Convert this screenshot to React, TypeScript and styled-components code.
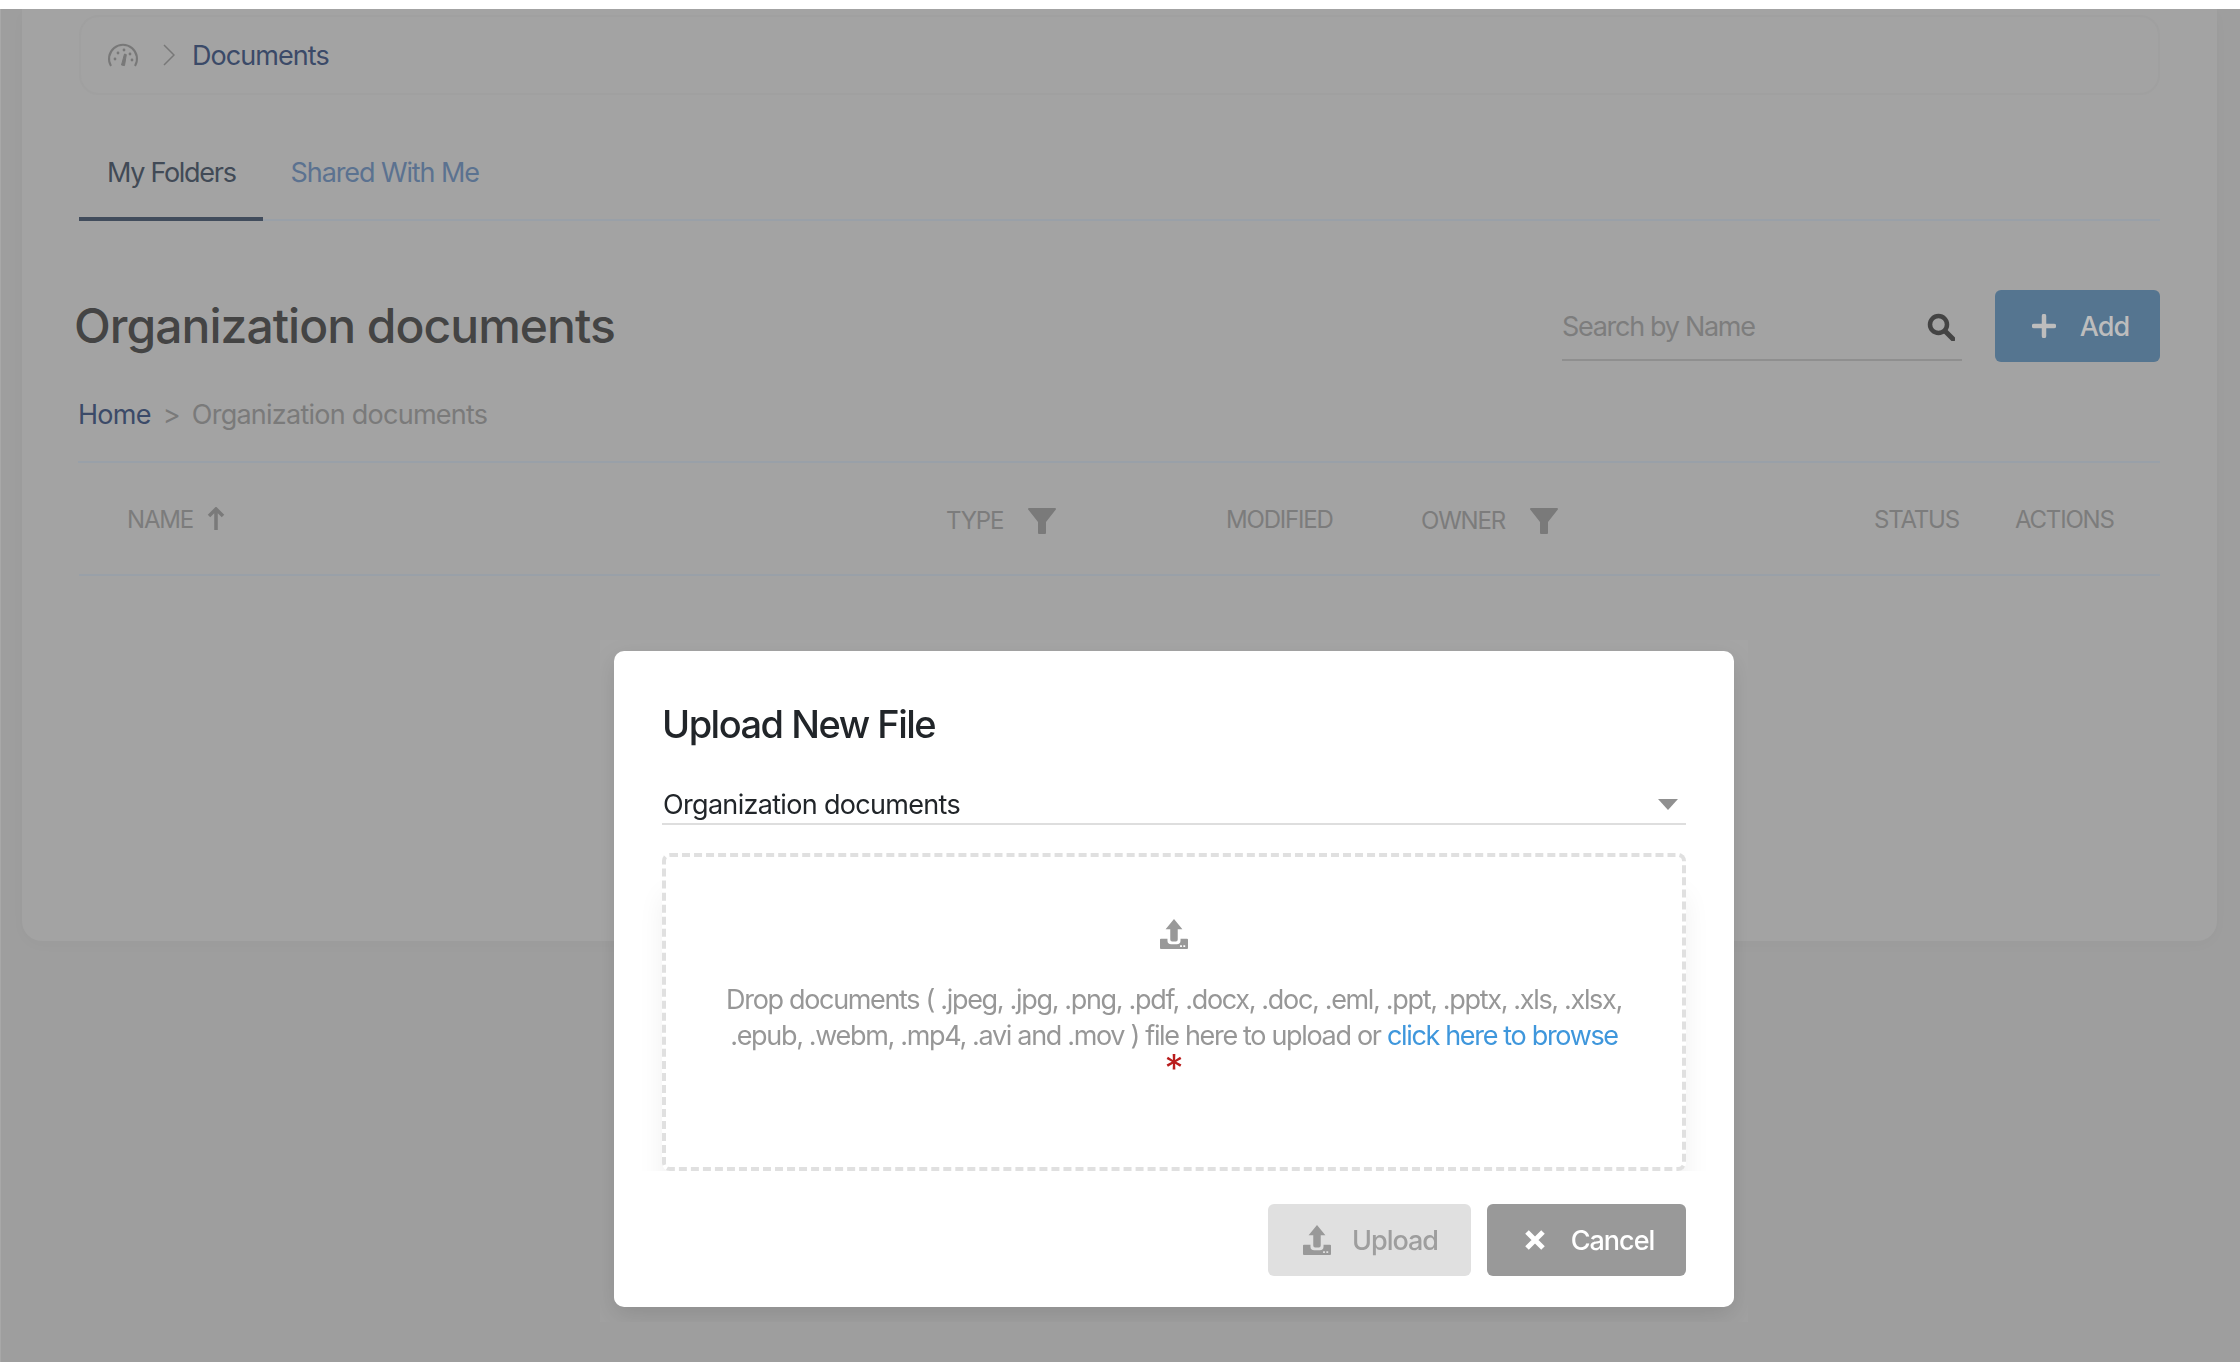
import React from 'react';
import styled, { createGlobalStyle } from 'styled-components';

const GlobalStyle = createGlobalStyle`
  html, body {
    margin: 0;
    height: 100%;
    overflow: hidden;
    background: #fff;
    font-family: Inter, "Noto Sans", "Liberation Sans", sans-serif;
  }
  * { box-sizing: border-box; }
`;

const TopStrip = styled.div`
  height: 9px;
  background: #fff;
`;

const Page = styled.div`
  height: 1353px;
  background: #9e9e9e;
  border-left: 1px solid #a8a8a8;
  padding: 0 23px 0 21px;
  overflow: hidden;
`;

const Card = styled.main`
  height: 932px;
  background: #a3a3a3;
  border-radius: 0 0 20px 20px;
  box-shadow: 0 4px 16px rgba(0, 0, 0, 0.02);
  padding: 6px 57px 0 57px;
`;

const Crumbs = styled.nav`
  height: 80px;
  border: 2px solid #a0a0a0;
  border-radius: 20px;
  display: flex;
  align-items: center;
  padding: 0 0 0 26px;
`;

const CrumbLink = styled.span`
  margin-left: 17px;
  font-size: 27px;
  letter-spacing: -0.95px;
  color: #3b4a68;
`;

const CrumbArrow = styled.svg`
  margin-left: 24px;
  width: 12px;
  height: 22px;
`;

const Tabs = styled.div`
  margin-top: 51px;
  height: 75px;
  display: flex;
  border-bottom: 2px solid #99a0a8;
`;

const Tab = styled.div<{ $active?: boolean }>`
  height: 75px;
  padding: 10px 27px 0 28px;
  font-size: 27px;
  letter-spacing: ${(p) => (p.$active ? '-1.3px' : '-1.1px')};
  color: ${(p) => (p.$active ? '#414a56' : '#5b7290')};
  border-bottom: ${(p) => (p.$active ? '4px solid #414c5c' : 'none')};
`;

const TitleRow = styled.div`
  margin-top: 69px;
  display: flex;
  align-items: flex-start;
`;

const Title = styled.h1`
  margin: 0 0 0 -5px;
  flex: 1;
  font-size: 48px;
  line-height: 72px;
  font-weight: 500;
  letter-spacing: -0.98px;
  color: #444;
`;

const Search = styled.div`
  width: 400px;
  height: 71px;
  border-bottom: 2px solid #8f8f8f;
  display: flex;
  align-items: center;
  justify-content: space-between;
  padding: 4px 7px 0 0;
  font-size: 27px;
  letter-spacing: -1.3px;
  color: #7d7d7d;
`;

const AddButton = styled.button`
  margin-left: 33px;
  width: 165px;
  height: 72px;
  border: none;
  border-radius: 6px;
  background: #557590;
  color: #bdbdbd;
  display: flex;
  align-items: center;
  justify-content: center;
  gap: 24px;
  padding: 0 0 0 6px;
  font: 500 27px Inter, "Noto Sans", sans-serif;
  letter-spacing: -0.9px;
`;

const Trail = styled.div`
  margin: 34px 0 0 -1px;
  height: 67px;
  display: flex;
  gap: 12px;
  font-size: 27px;
  line-height: 38px;
  letter-spacing: -0.75px;
  color: #7a7a7a;
  border-bottom: 2px solid #99a0a8;
`;

const TrailHome = styled.span`
  color: #3b4a68;
`;

const HeaderRow = styled.div`
  height: 113px;
  display: grid;
  grid-template-columns: 819px 280px 195px 453px 141px 1fr;
  align-items: center;
  padding: 1px 0 0 48px;
  border-bottom: 2px solid #99a0a8;
`;

const HeaderCell = styled.div`
  display: flex;
  align-items: center;
  gap: 14px;
  font-size: 24px;
  letter-spacing: -1.2px;
  color: #7c7c7c;
`;

const FilterCell = styled(HeaderCell)`
  gap: 25px;
  margin-top: 3px;
`;

const Overlay = styled.div`
  position: fixed;
  top: 9px;
  left: 0;
  right: 0;
  bottom: 0;
  display: flex;
  justify-content: flex-start;
  padding: 631px 0 0 600px;
`;

const ModalClip = styled.div`
  width: 1148px;
  height: 682px;
  padding: 11px 14px;
  overflow: hidden;
  background: rgba(255, 255, 255, 0.03);
`;

const Modal = styled.div`
  width: 1120px;
  height: 656px;
  background: #fff;
  border-radius: 10px;
  box-shadow: 0 8px 24px rgba(0, 0, 0, 0.12);
  padding: 49px 48px 0 48px;
`;

const ModalTitle = styled.h2`
  margin: 0;
  font-size: 38px;
  line-height: 48px;
  font-weight: 500;
  letter-spacing: -1.5px;
  color: #212529;
`;

const SelectBox = styled.div`
  margin-top: 29px;
  height: 48px;
  display: flex;
  align-items: center;
  justify-content: space-between;
  padding: 8px 8px 0 1px;
  border-bottom: 2px solid #dedede;
  font-size: 27px;
  letter-spacing: -0.68px;
  color: #212529;
`;

const DropZone = styled.div`
  margin-top: 28px;
  height: 318px;
  border: 4px dashed #e0e0e0;
  border-radius: 8px;
  box-shadow: 0 40px 28px -2px rgba(0, 0, 0, 0.07);
  display: flex;
  flex-direction: column;
  align-items: center;
  padding-top: 62px;
  color: #999;
`;

const DropText = styled.p`
  margin: 33px 0 0;
  width: 945px;
  text-align: center;
  font-size: 27px;
  line-height: 36px;
  letter-spacing: -1.33px;
  color: #979797;
`;

const BrowseLink = styled.span`
  color: #3f97dc;
`;

const Required = styled.div`
  height: 20px;
  font-size: 38px;
  line-height: 28px;
  color: #b91c1c;
`;

const ModalFooter = styled.div`
  position: relative;
  height: 135px;
  margin: 0 -48px;
  background: #fff;
  border-radius: 0 0 10px 10px;
  display: flex;
  justify-content: flex-end;
  gap: 16px;
  padding: 33px 48px 0 0;
`;

const FooterButton = styled.button<{ $primary?: boolean }>`
  height: 72px;
  width: ${(p) => (p.$primary ? '203px' : '199px')};
  border: none;
  border-radius: 6px;
  background: ${(p) => (p.$primary ? '#e0e0e0' : '#999')};
  color: ${(p) => (p.$primary ? '#9e9e9e' : '#fff')};
  display: flex;
  align-items: center;
  justify-content: center;
  gap: ${(p) => (p.$primary ? '21px' : '25px')};
  padding: ${(p) => (p.$primary ? '0 0 0 2px' : '0 0 0 5px')};
  font: 500 27px Inter, "Noto Sans", sans-serif;
  letter-spacing: -1px;
`;

const GaugeIcon = () => (
  <svg width="32" height="24" viewBox="0 0 32 24" fill="none">
    <path d="M4 23a14 14 0 1 1 24 0" stroke="#787878" strokeWidth="2" />
    <path d="M14.5 22l3-11 1.8.6-1.8 11z" fill="#787878" stroke="#787878" />
    <circle cx="8" cy="16" r="1.4" fill="#787878" />
    <circle cx="11" cy="10" r="1.4" fill="#787878" />
    <circle cx="17" cy="7" r="1.4" fill="#787878" />
    <circle cx="23" cy="11" r="1.4" fill="#787878" />
    <circle cx="25" cy="17" r="1.4" fill="#787878" />
  </svg>
);

const FilterIcon = () => (
  <svg width="28" height="26" viewBox="0 0 28 26">
    <path d="M1 0h26a1 1 0 0 1 .8 1.600L18 14v11a1 1 0 0 1-1 1h-6a1 1 0 0 1-1-1V14L.2 1.600A1 1 0 0 1 1 0z" fill="#7a7a7a" />
  </svg>
);

const UpArrowIcon = () => (
  <svg width="18" height="24" viewBox="0 0 18 24" fill="none">
    <path d="M9 23V2M2 9l7-7 7 7" stroke="#7a7a7a" strokeWidth="3.5" strokeLinejoin="miter" />
  </svg>
);

const SearchIcon = () => (
  <svg width="28" height="28" viewBox="0 0 28 28" fill="none">
    <circle cx="11.5" cy="11.5" r="8.500" stroke="#444" strokeWidth="4.500" />
    <path d="M18 18l8 8" stroke="#444" strokeWidth="5" strokeLinecap="round" />
  </svg>
);

const PlusIcon = () => (
  <svg width="24" height="24" viewBox="0 0 24 24" fill="none">
    <path d="M12 2v20M2 12h20" stroke="#bdbdbd" strokeWidth="4.500" strokeLinecap="round" />
  </svg>
);

const UploadIcon = ({ size = 28 }: { size?: number }) => (
  <svg width={size} height={size + 2} viewBox="0 0 30 32" fill="#999">
    <path d="M15 0l9 11h-5v11a2 2 0 0 1-2 2h-4a2 2 0 0 1-2-2V11H6z" />
    <path
      fillRule="evenodd"
      d="M1 21h7v2a4 4 0 0 0 4 4h6a4 4 0 0 0 4-4v-2h7a1 1 0 0 1 1 1v9a1 1 0 0 1-1 1H1a1 1 0 0 1-1-1v-9a1 1 0 0 1 1-1zM21.500 28h2v2h-2zM25 28h2v2h-2z"
    />
  </svg>
);

const CloseIcon = () => (
  <svg width="22" height="22" viewBox="0 0 22 22" fill="none">
    <path d="M3 3l16 16M19 3L3 19" stroke="#fff" strokeWidth="5" />
  </svg>
);

const App: React.FC = () => {
  return (
    <>
      <GlobalStyle />
      <TopStrip />
      <Page>
        <Card>
          <Crumbs>
            <GaugeIcon />
            <CrumbArrow viewBox="0 0 12 22" fill="none">
              <path d="M1 1l10 10L1 21" stroke="#787878" strokeWidth="1.5" />
            </CrumbArrow>
            <CrumbLink>Documents</CrumbLink>
          </Crumbs>

          <Tabs>
            <Tab $active>My Folders</Tab>
            <Tab>Shared With Me</Tab>
          </Tabs>

          <TitleRow>
            <Title>Organization documents</Title>
            <Search>
              Search by Name
              <SearchIcon />
            </Search>
            <AddButton>
              <PlusIcon />
              Add
            </AddButton>
          </TitleRow>

          <Trail>
            <TrailHome>Home</TrailHome>
            <span>&gt;</span>
            <span>Organization documents</span>
          </Trail>

          <HeaderRow>
            <HeaderCell>
              NAME
              <UpArrowIcon />
            </HeaderCell>
            <FilterCell>
              TYPE
              <FilterIcon />
            </FilterCell>
            <HeaderCell>MODIFIED</HeaderCell>
            <FilterCell>
              OWNER
              <FilterIcon />
            </FilterCell>
            <HeaderCell>STATUS</HeaderCell>
            <HeaderCell>ACTIONS</HeaderCell>
          </HeaderRow>
        </Card>
      </Page>

      <Overlay>
        <ModalClip>
          <Modal>
            <ModalTitle>Upload New File</ModalTitle>
            <SelectBox>
              Organization documents
              <svg width="20" height="11" viewBox="0 0 20 11">
                <path d="M0 0h20L10 11z" fill="#909090" />
              </svg>
            </SelectBox>
            <DropZone>
              <UploadIcon />
              <DropText>
                Drop documents ( .jpeg, .jpg, .png, .pdf, .docx, .doc, .eml, .ppt, .pptx, .xls, .xlsx,
                .epub, .webm, .mp4, .avi and .mov ) file here to upload or{' '}
                <BrowseLink>click here to browse</BrowseLink>
              </DropText>
              <Required>*</Required>
            </DropZone>
            <ModalFooter>
              <FooterButton $primary>
                <UploadIcon />
                Upload
              </FooterButton>
              <FooterButton>
                <CloseIcon />
                Cancel
              </FooterButton>
            </ModalFooter>
          </Modal>
        </ModalClip>
      </Overlay>
    </>
  );
};

export default App;
